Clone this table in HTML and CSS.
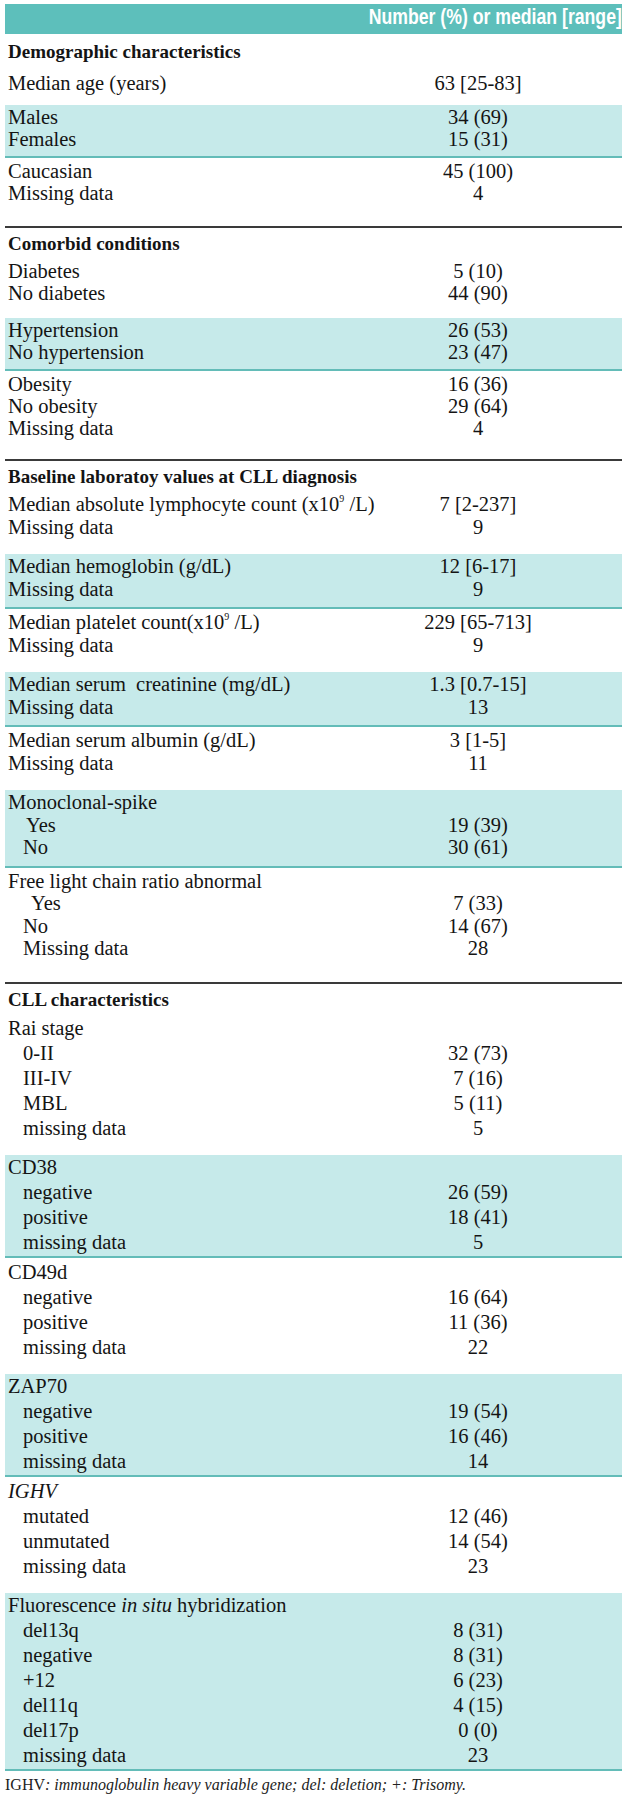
FILE: index.html
```html
<!DOCTYPE html>
<html lang="en">
<head>
<meta charset="utf-8">
<title>Patient characteristics</title>
<link rel="stylesheet" href="styles.css">
</head>
<body>
<div class="page">
  <div class="tbl">
    <div class="thead">
      <div></div>
      <div class="th"><span>Number (%) or median [range]</span></div>
    </div>

    <section class="sec s-top">
      <div class="sec-title">Demographic characteristics</div>
      <div class="grp grp-first">
        <div class="row"><span class="lab">Median age (years)</span><span class="val">63 [25-83]</span></div>
      </div>
      <div class="grp band">
        <div class="row"><span class="lab">Males</span><span class="val">34 (69)</span></div>
        <div class="row"><span class="lab">Females</span><span class="val">15 (31)</span></div>
      </div>
      <div class="grp grp-last">
        <div class="row"><span class="lab">Caucasian</span><span class="val">45 (100)</span></div>
        <div class="row"><span class="lab">Missing data</span><span class="val">4</span></div>
      </div>
    </section>

    <section class="sec s-top">
      <div class="sec-title">Comorbid conditions</div>
      <div class="grp">
        <div class="row"><span class="lab">Diabetes</span><span class="val">5 (10)</span></div>
        <div class="row"><span class="lab">No diabetes</span><span class="val">44 (90)</span></div>
      </div>
      <div class="grp band">
        <div class="row"><span class="lab">Hypertension</span><span class="val">26 (53)</span></div>
        <div class="row"><span class="lab">No hypertension</span><span class="val">23 (47)</span></div>
      </div>
      <div class="grp">
        <div class="row"><span class="lab">Obesity</span><span class="val">16 (36)</span></div>
        <div class="row"><span class="lab">No obesity</span><span class="val">29 (64)</span></div>
        <div class="row"><span class="lab">Missing data</span><span class="val">4</span></div>
      </div>
    </section>

    <section class="sec s-mid">
      <div class="sec-title">Baseline laboratoy values at CLL diagnosis</div>
      <div class="grp">
        <div class="row"><span class="lab">Median absolute lymphocyte count (x10<sup>9</sup> /L)</span><span class="val">7 [2-237]</span></div>
        <div class="row"><span class="lab">Missing data</span><span class="val">9</span></div>
      </div>
      <div class="grp band">
        <div class="row"><span class="lab">Median hemoglobin (g/dL)</span><span class="val">12 [6-17]</span></div>
        <div class="row"><span class="lab">Missing data</span><span class="val">9</span></div>
      </div>
      <div class="grp">
        <div class="row"><span class="lab">Median platelet count(x10<sup>9</sup> /L)</span><span class="val">229 [65-713]</span></div>
        <div class="row"><span class="lab">Missing data</span><span class="val">9</span></div>
      </div>
      <div class="grp band">
        <div class="row"><span class="lab">Median serum&nbsp; creatinine (mg/dL)</span><span class="val">1.3 [0.7-15]</span></div>
        <div class="row"><span class="lab">Missing data</span><span class="val">13</span></div>
      </div>
      <div class="grp">
        <div class="row"><span class="lab">Median serum albumin (g/dL)</span><span class="val">3 [1-5]</span></div>
        <div class="row"><span class="lab">Missing data</span><span class="val">11</span></div>
      </div>
      <div class="grp band">
        <div class="row"><span class="lab">Monoclonal-spike</span><span class="val"></span></div>
        <div class="row sub"><span class="lab lab-yes">Yes</span><span class="val">19 (39)</span></div>
        <div class="row sub"><span class="lab">No</span><span class="val">30 (61)</span></div>
      </div>
      <div class="grp">
        <div class="row"><span class="lab">Free light chain ratio abnormal</span><span class="val"></span></div>
        <div class="row sub"><span class="lab lab-yes2">Yes</span><span class="val">7 (33)</span></div>
        <div class="row sub"><span class="lab">No</span><span class="val">14 (67)</span></div>
        <div class="row sub"><span class="lab">Missing data</span><span class="val">28</span></div>
      </div>
    </section>

    <section class="sec s-low">
      <div class="sec-title">CLL characteristics</div>
      <div class="grp">
        <div class="row"><span class="lab">Rai stage</span><span class="val"></span></div>
        <div class="row sub"><span class="lab">0-II</span><span class="val">32 (73)</span></div>
        <div class="row sub"><span class="lab">III-IV</span><span class="val">7 (16)</span></div>
        <div class="row sub"><span class="lab">MBL</span><span class="val">5 (11)</span></div>
        <div class="row sub"><span class="lab">missing data</span><span class="val">5</span></div>
      </div>
      <div class="grp band">
        <div class="row"><span class="lab">CD38</span><span class="val"></span></div>
        <div class="row sub"><span class="lab">negative</span><span class="val">26 (59)</span></div>
        <div class="row sub"><span class="lab">positive</span><span class="val">18 (41)</span></div>
        <div class="row sub"><span class="lab">missing data</span><span class="val">5</span></div>
      </div>
      <div class="grp">
        <div class="row"><span class="lab">CD49d</span><span class="val"></span></div>
        <div class="row sub"><span class="lab">negative</span><span class="val">16 (64)</span></div>
        <div class="row sub"><span class="lab">positive</span><span class="val">11 (36)</span></div>
        <div class="row sub"><span class="lab">missing data</span><span class="val">22</span></div>
      </div>
      <div class="grp band">
        <div class="row"><span class="lab">ZAP70</span><span class="val"></span></div>
        <div class="row sub"><span class="lab">negative</span><span class="val">19 (54)</span></div>
        <div class="row sub"><span class="lab">positive</span><span class="val">16 (46)</span></div>
        <div class="row sub"><span class="lab">missing data</span><span class="val">14</span></div>
      </div>
      <div class="grp">
        <div class="row"><span class="lab"><i>IGHV</i></span><span class="val"></span></div>
        <div class="row sub"><span class="lab">mutated</span><span class="val">12 (46)</span></div>
        <div class="row sub"><span class="lab">unmutated</span><span class="val">14 (54)</span></div>
        <div class="row sub"><span class="lab">missing data</span><span class="val">23</span></div>
      </div>
      <div class="grp band">
        <div class="row"><span class="lab">Fluorescence <i>in situ</i> hybridization</span><span class="val"></span></div>
        <div class="row sub"><span class="lab">del13q</span><span class="val">8 (31)</span></div>
        <div class="row sub"><span class="lab">negative</span><span class="val">8 (31)</span></div>
        <div class="row sub"><span class="lab">+12</span><span class="val">6 (23)</span></div>
        <div class="row sub"><span class="lab">del11q</span><span class="val">4 (15)</span></div>
        <div class="row sub"><span class="lab">del17p</span><span class="val">0 (0)</span></div>
        <div class="row sub"><span class="lab">missing data</span><span class="val">23</span></div>
      </div>
    </section>
  </div>
  <p class="note">IGHV<em>: immunoglobulin heavy variable gene; del: deletion; +: Trisomy.</em></p>
</div>
</body>
</html>
```

FILE: styles.css
```css
* {
  box-sizing: border-box;
}

html, body {
  margin: 0;
  padding: 0;
  background: #ffffff;
}

body {
  font-family: "Liberation Serif", "Times New Roman", serif;
  color: #141414;
}

.page {
  padding: 4px 6px 0 5px;
}

.tbl {
  width: 617px;
}

.thead {
  display: grid;
  grid-template-columns: 329px 288px;
  height: 30px;
  background: #5dbfbb;
}

.th {
  text-align: center;
  font-family: "Liberation Sans", Arial, sans-serif;
  font-weight: 700;
  font-size: 22.5px;
  line-height: 26px;
  color: #ffffff;
  white-space: nowrap;
}

.th span {
  display: inline-block;
  transform: scaleX(0.785);
}

.sec {
  padding-bottom: 6px;
}

.sec + .sec {
  border-top: 2px solid #3a3a3a;
}

.sec:last-of-type {
  padding-bottom: 0;
}

.sec-title {
  font-weight: 700;
  font-size: 19px;
  line-height: 23px;
  padding: 4px 3px 3px;
  white-space: nowrap;
}

.sec:first-of-type .sec-title {
  padding-top: 6px;
  padding-bottom: 7px;
}

.row {
  display: grid;
  grid-template-columns: 329px 288px;
  font-size: 20.5px;
  line-height: 22px;
}

.lab {
  padding-left: 3px;
  white-space: nowrap;
}

.sub .lab {
  padding-left: 18px;
}

.sub .lab-yes {
  padding-left: 21px;
}

.sub .lab-yes2 {
  padding-left: 26px;
}

.val {
  text-align: center;
  white-space: nowrap;
}

.lab sup {
  font-size: 10px;
  line-height: 0;
  vertical-align: 9px;
}

.grp {
  padding: 2px 0 14px;
}

.grp.grp-first {
  padding-bottom: 11px;
}

.grp.grp-last {
  padding-bottom: 16px;
}

.grp.band {
  background: #c6eaea;
  padding: 1px 0 6px;
  border-bottom: 2px solid #63bcb8;
}

/* middle section: slightly looser rows */
.s-mid .row {
  line-height: 22.5px;
}

.s-mid .grp {
  padding: 2px 0 16px;
}

.s-mid .grp.band {
  padding: 1px 0 7px;
}

/* last section: loosest rows */
.s-low .row {
  line-height: 25px;
}

.s-low .grp {
  padding: 2px 0 14px;
}

.s-low .grp.band {
  padding: 0 0 1px;
}

.note {
  margin: 4px 0 0;
  font-size: 16px;
  line-height: 20px;
  color: #222222;
}

.note em {
  font-style: italic;
}
```
